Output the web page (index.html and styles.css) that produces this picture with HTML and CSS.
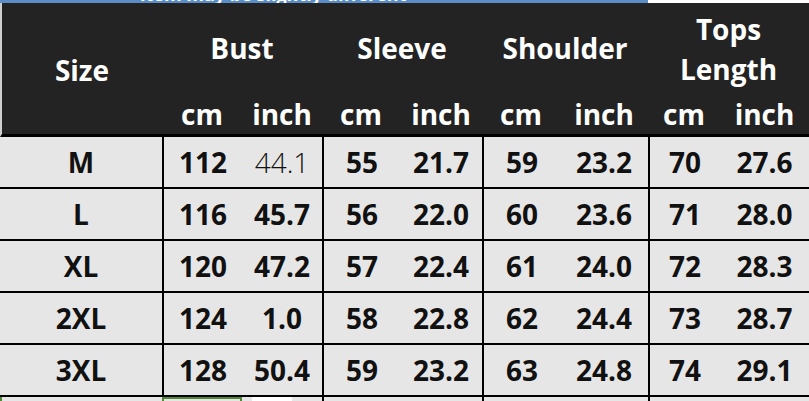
FILE: index.html
```html
<!DOCTYPE html>
<html>
<head>
<meta charset="utf-8">
<link rel="stylesheet" href="styles.css">
</head>
<body>
<div class="strip">
  <div class="strip-blue"><span class="strip-text">item may be slightly different</span></div>
  <div class="strip-white"></div>
</div>
<div class="head">
  <div class="h-size">Size</div>
  <div class="h-group">Bust</div>
  <div class="h-group">Sleeve</div>
  <div class="h-group">Shoulder</div>
  <div class="h-group h-two">Tops<br>Length</div>
  <div class="h-sub">cm</div><div class="h-sub">inch</div>
  <div class="h-sub">cm</div><div class="h-sub">inch</div>
  <div class="h-sub">cm</div><div class="h-sub">inch</div>
  <div class="h-sub">cm</div><div class="h-sub">inch</div>
</div>
<div class="body">
  <div class="row">
    <div class="c">M</div><div class="c g">112</div><div class="c light">44.1</div><div class="c g">55</div><div class="c">21.7</div><div class="c g">59</div><div class="c">23.2</div><div class="c g">70</div><div class="c">27.6</div>
  </div>
  <div class="row">
    <div class="c">L</div><div class="c g">116</div><div class="c">45.7</div><div class="c g">56</div><div class="c">22.0</div><div class="c g">60</div><div class="c">23.6</div><div class="c g">71</div><div class="c">28.0</div>
  </div>
  <div class="row">
    <div class="c">XL</div><div class="c g">120</div><div class="c">47.2</div><div class="c g">57</div><div class="c">22.4</div><div class="c g">61</div><div class="c">24.0</div><div class="c g">72</div><div class="c">28.3</div>
  </div>
  <div class="row">
    <div class="c">2XL</div><div class="c g">124</div><div class="c">1.0</div><div class="c g">58</div><div class="c">22.8</div><div class="c g">62</div><div class="c">24.4</div><div class="c g">73</div><div class="c">28.7</div>
  </div>
  <div class="row">
    <div class="c">3XL</div><div class="c g">128</div><div class="c">50.4</div><div class="c g">59</div><div class="c">23.2</div><div class="c g">63</div><div class="c">24.8</div><div class="c g">74</div><div class="c">29.1</div>
  </div>
  <div class="row last">
    <div class="c sel-left"></div><div class="c g sel"></div><div class="c"><span class="blank"></span></div><div class="c g"></div><div class="c"></div><div class="c g"></div><div class="c"></div><div class="c g"></div><div class="c"></div>
  </div>
</div>
</body>
</html>
```
FILE: styles.css
```css
* { box-sizing: border-box; }
html, body { margin: 0; padding: 0; }
body {
  width: 809px;
  height: 401px;
  overflow: hidden;
  background: #e6e6e6;
  font-family: "Open Sans", "Noto Sans", sans-serif;
  font-weight: 700;
  color: #111;
}
.strip {
  display: flex;
  height: 3px;
  overflow: hidden;
}
.strip-blue {
  width: 648px;
  background: #5b8ec6;
  overflow: hidden;
}
.strip-text {
  display: block;
  margin: -16px 0 0 140px;
  font-size: 18px;
  line-height: 20px;
  color: #fff;
  white-space: nowrap;
}
.strip-white { flex: 1; background: #fff; }

.head, .row {
  display: grid;
  grid-template-columns: 162px 80px 80px 78px 82px 78px 88px 72px 89px;
}
.head {
  background: #232323;
  color: #fff;
  grid-template-rows: 92px 39px;
  font-size: 28px;
  border-left: 2px solid #cfcfcf;
  border-bottom: 3px solid #000;
  grid-template-columns: 160px 80px 80px 78px 82px 78px 88px 72px 89px;
}
.h-size {
  grid-row: 1 / span 2;
  display: flex;
  align-items: center;
  justify-content: center;
  padding-top: 2px;
}
.h-group {
  grid-column: span 2;
  display: flex;
  align-items: center;
  justify-content: center;
  padding-bottom: 2px;
  line-height: 40px;
  text-align: center;
}
.h-two { padding-bottom: 0; padding-top: 0; }
.h-sub {
  display: flex;
  align-items: center;
  justify-content: center;
  padding-bottom: 2px;
}
.row {
  height: 52px;
  border-bottom: 2px solid #000;
  font-size: 28px;
}
.c {
  display: flex;
  align-items: center;
  justify-content: center;
}
.c.g { border-left: 2px solid #000; }
.light { font-weight: 300; }
.row.last { height: 6px; border-bottom: none; }
.sel { border: 2px solid #4f8a32 !important; border-bottom: none !important; }
.sel-left { border-left: 2px solid #4f8a32; }
.blank {
  display: block;
  width: 40px;
  height: 6px;
  background: #fff;
  margin-right: 20px;
}
```
